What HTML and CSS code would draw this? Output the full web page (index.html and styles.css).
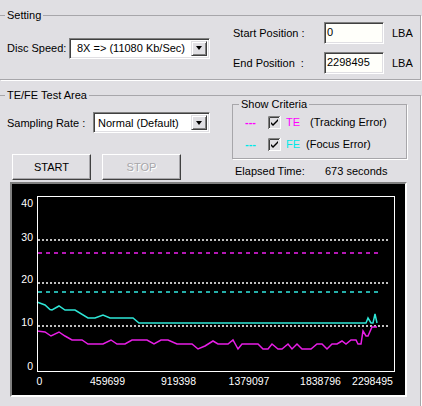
FILE: index.html
```html
<!DOCTYPE html>
<html lang="en">
<head>
    <meta charset="UTF-8">
    <title>TE/FE Test</title>
    <link rel="stylesheet" href="styles.css">
</head>
<body>
    <fieldset class="group setting">
        <legend>Setting</legend>
        <div class="setting-row">
            <div class="field">
                <span class="label speed-label">Disc Speed:</span>
                <div class="combo speed-combo">
                    <span class="combo-text">8X =&gt; (11080 Kb/Sec)</span>
                    <span class="drop"><i></i></span>
                </div>
            </div>
            <div class="positions">
                <span class="label">Start Position :</span>
                <div class="edit">0</div>
                <span class="unit">LBA</span>
                <span class="label">End Position&nbsp; :</span>
                <div class="edit">2298495</div>
                <span class="unit">LBA</span>
            </div>
        </div>
    </fieldset>

    <fieldset class="group test">
        <legend>TE/FE Test Area</legend>
        <div class="test-top">
            <div class="test-left">
                <div class="field">
                    <span class="label rate-label">Sampling Rate :</span>
                    <div class="combo rate-combo">
                        <span class="combo-text">Normal (Default)</span>
                        <span class="drop"><i></i></span>
                    </div>
                </div>
                <div class="buttons">
                    <button class="btn">START</button>
                    <button class="btn" disabled>STOP</button>
                </div>
            </div>
            <div class="test-right">
                <fieldset class="group criteria">
                    <legend>Show Criteria</legend>
                    <div class="crit-row">
                        <span class="dash te">---</span>
                        <svg class="check" width="13" height="13" viewBox="0 0 13 13">
                            <rect x="0" y="0" width="13" height="13" fill="#fff"/>
                            <path d="M0.5 13V0.5H12" stroke="#808080" fill="none"/>
                            <path d="M1.5 12V1.5H11" stroke="#404040" fill="none"/>
                            <rect x="2" y="2" width="10" height="10" fill="#e0dfe3"/>
                            <path d="M3 6l2 2 5-5v2l-5 5-2-2z" fill="#000"/>
                        </svg>
                        <span class="name te">TE</span>
                        <span class="desc te-desc">(Tracking Error)</span>
                    </div>
                    <div class="crit-row">
                        <span class="dash fe">---</span>
                        <svg class="check" width="13" height="13" viewBox="0 0 13 13">
                            <rect x="0" y="0" width="13" height="13" fill="#fff"/>
                            <path d="M0.5 13V0.5H12" stroke="#808080" fill="none"/>
                            <path d="M1.5 12V1.5H11" stroke="#404040" fill="none"/>
                            <rect x="2" y="2" width="10" height="10" fill="#e0dfe3"/>
                            <path d="M3 6l2 2 5-5v2l-5 5-2-2z" fill="#000"/>
                        </svg>
                        <span class="name fe">FE</span>
                        <span class="desc fe-desc">(Focus Error)</span>
                    </div>
                </fieldset>
                <div class="elapsed">
                    <span class="elapsed-label">Elapsed Time:</span>
                    <span>673 seconds</span>
                </div>
            </div>
        </div>

        <div class="chart">
            <svg width="393" height="211" viewBox="0 0 393 211">
                <rect width="393" height="211" fill="#000"/>
                <g class="ticks" fill="#fff" text-anchor="end">
                    <text x="21" y="23">40</text>
                    <text x="21" y="57">30</text>
                    <text x="21" y="99">20</text>
                    <text x="21" y="142">10</text>
                    <text x="21" y="186">0</text>
                </g>
                <g class="ticks" fill="#fff" text-anchor="middle">
                    <text x="27.5" y="201">0</text>
                    <text x="95.5" y="201">459699</text>
                    <text x="166.5" y="201">919398</text>
                    <text x="237" y="201">1379097</text>
                    <text x="308.5" y="201">1838796</text>
                    <text x="360.5" y="201">2298495</text>
                </g>
                <!-- limits -->
                <g stroke-width="1.5">
                    <line x1="26" y1="56" x2="378" y2="56" stroke="#fff" stroke-dasharray="2 2"/>
                    <line x1="26" y1="99" x2="378" y2="99" stroke="#fff" stroke-dasharray="2 2"/>
                    <line x1="26" y1="142" x2="378" y2="142" stroke="#fff" stroke-dasharray="2 2"/>
                    <line x1="26" y1="69" x2="370" y2="69" stroke="#f020f0" stroke-dasharray="4 4"/>
                    <line x1="26" y1="108" x2="370" y2="108" stroke="#30e8e0" stroke-dasharray="4 4"/>
                </g>
                <!-- FE -->
                <polyline fill="none" stroke="#2ee6d6" stroke-width="1.5"
                    points="25,118 29,119.5 33,121 38,125.5 40,126 47,122 53,126 63,126 76,134 83,134 91,131 98,134 121,134 127,139 354,139 356,134 359,139 361,139 363,130 365,139"/>
                <!-- TE -->
                <polyline fill="none" stroke="#e81ee6" stroke-width="1.5"
                    points="25,147 33,148 39,152 47,148 53,152 60,156 70,156 76,160 91,160 99,156 105,160 113,160 120,156 135,156 142,160 149,156 156,156 165,160 180,160 186,165 193,162 201,157 206,160 216,160 221,156 226,165 230,160 246,160 251,165 256,165 260,160 266,165 270,165 276,160 280,165 285,160 290,165 299,165 305,160 310,160 315,165 320,160 325,160 330,157 334,160 339,156 344,156 346,160 349,160 351,147 354,152 356,152 360,143 365,143"/>
                <rect x="25.5" y="12.5" width="357" height="175" fill="none" stroke="#fff"/>
            </svg>
        </div>
    </fieldset>
</body>
</html>
```

FILE: styles.css
```css
body {
    margin: 0;
    width: 422px;
    height: 406px;
    overflow: hidden;
    background-color: #e0dfe3;
    font-family: "Liberation Sans", Arial, sans-serif;
    font-size: 11px;
    color: #000;
}
.group {
    margin: 0 1px 0 0;
    padding: 0 0 0 5px;
    border: 1px solid #a7a6aa;
    border-left: none;
    box-shadow: 1px 1px 0 #fff;
}
.group legend {
    padding: 0 2px;
    line-height: 12px;
}
.label {
    display: inline-block;
}

/* setting */
.setting {
    margin-top: 9px;
    padding-top: 1px;
    padding-bottom: 5px;
}
.setting-row {
    display: flex;
    align-items: center;
    margin-left: 2px;
}
.field {
    display: flex;
    align-items: center;
}
.speed-label {
    width: 62px;
}
.positions {
    display: grid;
    grid-template-columns: 83px 60px auto;
    column-gap: 8px;
    row-gap: 8px;
    align-items: center;
    margin-left: 23px;
}
.positions .label {
    margin-right: -8px;
}
.edit {
    box-sizing: border-box;
    height: 22px;
    padding: 2px 0 0 2px;
    line-height: 14px;
    background-color: #fffffa;
    border: 1px solid;
    border-color: #808080 #fff #fff #808080;
    box-shadow: inset 1px 1px 0 #404040, inset -1px -1px 0 #e0dfe3;
}

/* combo boxes */
.combo {
    box-sizing: border-box;
    display: flex;
    align-items: center;
    height: 21px;
    background-color: #fff;
    border: 1px solid;
    border-color: #808080 #fff #fff #808080;
    box-shadow: inset 1px 1px 0 #404040, inset -1px -1px 0 #e0dfe3;
    padding: 2px;
}
.combo-text {
    flex: 1;
    padding-left: 2px;
}
.speed-combo {
    width: 141px;
}
.speed-combo .combo-text {
    padding-left: 5px;
}
.rate-combo {
    width: 117px;
}
.drop {
    box-sizing: border-box;
    width: 16px;
    height: 15px;
    display: flex;
    align-items: center;
    justify-content: center;
    background-color: #e0dfe3;
    border: 1px solid;
    border-color: #e0dfe3 #404040 #404040 #e0dfe3;
    box-shadow: inset 1px 1px 0 #fff, inset -1px -1px 0 #808080;
}
.drop i {
    width: 0;
    height: 0;
    border-left: 3.5px solid transparent;
    border-right: 3.5px solid transparent;
    border-top: 4px solid #000;
}

/* test area */
.test {
    margin-top: 9px;
    padding-bottom: 30px;
}
.test-top {
    display: flex;
    justify-content: space-between;
    margin-left: 2px;
}
.test-left {
    padding-top: 11px;
}
.rate-label {
    width: 86px;
}
.buttons {
    display: flex;
    gap: 11px;
    margin: 21px 0 0 5px;
}
.btn {
    box-sizing: border-box;
    width: 79px;
    height: 26px;
    padding: 0;
    font-family: inherit;
    font-size: 11px;
    color: #000;
    background-color: #e0dfe3;
    border: 1px solid;
    border-color: #fff #404040 #404040 #fff;
    box-shadow: inset -1px -1px 0 #a7a6aa;
}
.btn:disabled {
    color: #a7a6aa;
    text-shadow: 1px 1px 0 #fff;
}
.test-right {
    width: 175px;
    margin: -3px 13px 0 0;
}
.criteria {
    margin: 0;
    padding: 1px 0 3px 6px;
    border-left: 1px solid #a7a6aa;
}
.crit-row {
    display: flex;
    align-items: center;
    height: 22px;
}
.dash {
    width: 23px;
    margin-left: 6px;
    font-weight: bold;
}
.check {
    flex: none;
}
.name {
    margin-left: 5px;
    width: 14px;
}
.te {
    color: #ff00ff;
}
.fe {
    color: #00e8e8;
}
.te-desc {
    margin-left: 10px;
}
.fe-desc {
    margin-left: 6px;
}
.elapsed {
    display: flex;
    margin: 6px 0 0 3px;
    line-height: 13px;
}
.elapsed-label {
    width: 90px;
}

/* chart */
.chart {
    width: 393px;
    height: 211px;
    margin: 2px 0 0 5px;
    border: 2px solid;
    border-color: #808080 #fff #fff #808080;
}
.chart svg {
    display: block;
}
.ticks {
    font-family: "Liberation Sans", Arial, sans-serif;
    font-size: 10.5px;
}
```
